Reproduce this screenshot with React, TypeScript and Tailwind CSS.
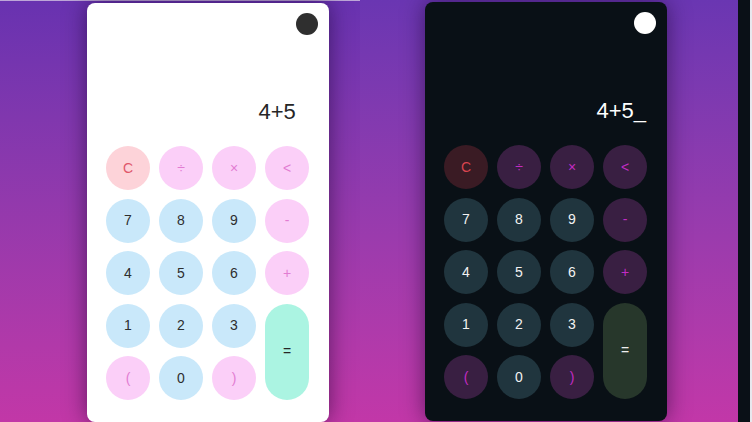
import React from 'react';

type Kind = 'clear' | 'op' | 'num' | 'eq';

type Key = {
  label: string;
  kind: Kind;
  tall?: boolean;
};

const keys: Key[] = [
  { label: 'C', kind: 'clear' },
  { label: '÷', kind: 'op' },
  { label: '×', kind: 'op' },
  { label: '<', kind: 'op' },
  { label: '7', kind: 'num' },
  { label: '8', kind: 'num' },
  { label: '9', kind: 'num' },
  { label: '-', kind: 'op' },
  { label: '4', kind: 'num' },
  { label: '5', kind: 'num' },
  { label: '6', kind: 'num' },
  { label: '+', kind: 'op' },
  { label: '1', kind: 'num' },
  { label: '2', kind: 'num' },
  { label: '3', kind: 'num' },
  { label: '=', kind: 'eq', tall: true },
  { label: '(', kind: 'op' },
  { label: '0', kind: 'num' },
  { label: ')', kind: 'op' },
];

const lightKey: Record<Kind, string> = {
  clear: 'bg-[#fdd3d9] text-[#e0576a]',
  op: 'bg-[#fbcff8] text-[#e27cd2]',
  num: 'bg-[#c9e8fa] text-[#2e2e2e]',
  eq: 'bg-[#abf4e2] text-[#262626]',
};

const darkKey: Record<Kind, string> = {
  clear: 'bg-[#3a1b24] text-[#d8444f]',
  op: 'bg-[#391f42] text-[#c22cc2]',
  num: 'bg-[#20353e] text-[#f2f2f2]',
  eq: 'bg-[#27372b] text-[#efefef]',
};

const Calculator: React.FC<{ dark?: boolean }> = ({ dark = false }) => {
  const palette = dark ? darkKey : lightKey;

  return (
    <div
      className={`flex flex-col w-[242px] h-[419px] rounded-[8px] shadow-[0_0_22px_rgba(20,0,40,0.55)] ${
        dark ? 'bg-[#091016]' : 'bg-white'
      }`}
    >
      {/* Theme toggle */}
      <div className="flex justify-end pt-[10px] pr-[11px]">
        <div className={`w-[22px] h-[22px] rounded-full ${dark ? 'bg-white' : 'bg-[#2f2f2f]'}`}></div>
      </div>

      {/* Display */}
      <div
        className={`mt-[63px] pr-[21px] h-[28px] flex justify-end items-center text-[22px] leading-[28px] ${
          dark ? 'text-white' : 'text-[#262626]'
        }`}
      >
        <span>4+5</span>
        <span className={dark ? 'text-white' : 'text-transparent'}>_</span>
      </div>

      {/* Keypad */}
      <div className="mt-[20px] px-[19px] grid grid-cols-[repeat(4,44px)] auto-rows-[44px] gap-x-[9px] gap-y-[8.5px]">
        {keys.map((k) => (
          <button
            key={k.label}
            className={`flex items-center justify-center rounded-full text-[14px] ${palette[k.kind]} ${
              k.tall ? 'row-span-2' : ''
            }`}
          >
            {k.label}
          </button>
        ))}
      </div>
    </div>
  );
};

export default function App() {
  return (
    <div
      className="flex w-[752px] h-[422px] overflow-hidden"
      style={{ fontFamily: '"Liberation Sans", Arial, sans-serif' }}
    >
      {/* Light screenshot */}
      <div className="w-[360px] h-full bg-linear-to-b from-[#6832b0] to-[#c237a7] border-t border-[#bda6d8] pl-[87px] pt-[2px]">
        <Calculator />
      </div>

      {/* Dark screenshot */}
      <div className="w-[378px] h-full bg-linear-to-b from-[#6a36b2] to-[#c237a8] pl-[65px] pt-[2px]">
        <Calculator dark />
      </div>

      <div className="w-[12px] h-full bg-[#0a1017]"></div>
      <div className="w-[2px] h-full bg-[#e8e8ee]"></div>
    </div>
  );
}
